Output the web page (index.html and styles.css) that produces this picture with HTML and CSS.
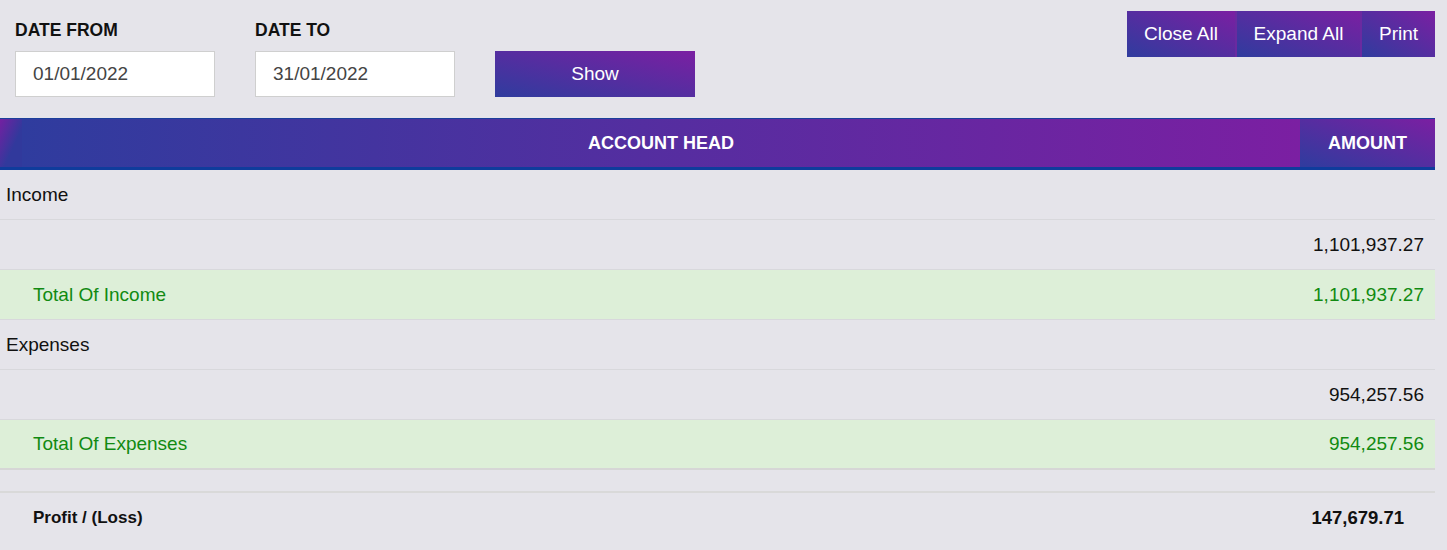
FILE: index.html
```html
<!DOCTYPE html>
<html>
<head>
<meta charset="utf-8">
<link rel="stylesheet" href="styles.css">
</head>
<body>
<div class="top">
  <div class="filters">
    <div class="field">
      <label class="lbl">DATE FROM</label>
      <div class="input">01/01/2022</div>
    </div>
    <div class="field">
      <label class="lbl">DATE TO</label>
      <div class="input">31/01/2022</div>
    </div>
    <div class="field">
      <div class="lbl">&nbsp;</div>
      <button class="btn show">Show</button>
    </div>
  </div>
  <div class="actions">
    <button class="btn act w1">Close All</button>
    <button class="btn act w2">Expand All</button>
    <button class="btn act w3">Print</button>
  </div>
</div>

<div class="report">
  <div class="head">
    <div class="hc hc-toggle"></div>
    <div class="hc hc-main">ACCOUNT HEAD</div>
    <div class="hc hc-amt">AMOUNT</div>
  </div>
  <div class="row group"><span>Income</span></div>
  <div class="row"><span></span><span class="amt">1,101,937.27</span></div>
  <div class="row total"><span>Total Of Income</span><span class="amt">1,101,937.27</span></div>
  <div class="row group"><span>Expenses</span></div>
  <div class="row"><span></span><span class="amt">954,257.56</span></div>
  <div class="row total last"><span>Total Of Expenses</span><span class="amt">954,257.56</span></div>
  <div class="spacer"></div>
  <div class="row profit"><span>Profit / (Loss)</span><span class="amt">147,679.71</span></div>
</div>
</body>
</html>
```
FILE: styles.css
```css
html, body {
  margin: 0;
  padding: 0;
  background: #e5e4ea;
  font-family: "Liberation Sans", Arial, sans-serif;
  color: #111;
}

.top {
  display: flex;
  justify-content: space-between;
  align-items: flex-start;
  padding: 0 12px 0 15px;
}

.filters {
  display: flex;
  gap: 40px;
  padding-top: 21px;
}

.field {
  display: flex;
  flex-direction: column;
}

.lbl {
  font-size: 17.5px;
  font-weight: bold;
  line-height: 19px;
  height: 19px;
  margin-bottom: 11px;
  color: #111;
}

.input {
  box-sizing: border-box;
  width: 200px;
  height: 46px;
  background: #fff;
  border: 1px solid #cfcfcf;
  padding: 0 0 0 17px;
  font-size: 19px;
  line-height: 44px;
  color: #444;
}

.btn {
  border: none;
  color: #fff;
  font-family: "Liberation Sans", Arial, sans-serif;
  background: linear-gradient(to top right, #2f3c9e, #7b1fa2);
  cursor: pointer;
  padding: 0;
}

.show {
  width: 200px;
  height: 46px;
  font-size: 19px;
}

.actions {
  display: flex;
  gap: 2px;
  margin-top: 11px;
  background: #6a2aa0;
}

.act {
  height: 46px;
  font-size: 19px;
}
.w1 { width: 108px; }
.w2 { width: 123px; }
.w3 { width: 73px; }

.report {
  margin-top: 21px;
  width: 1435px;
}

.head {
  display: flex;
  height: 48px;
  border-top: 1px solid #1b3f9c;
  border-bottom: 3px solid #0f3c9c;
}

.hc {
  display: flex;
  align-items: center;
  justify-content: center;
  color: #fff;
  font-weight: bold;
  font-size: 18px;
}
.hc-toggle {
  width: 22px;
  background: linear-gradient(to bottom right, #7420a1, #31399c 60%);
}
.hc-main {
  flex: 1;
  background: linear-gradient(to right, #2f3c9e, #7b1fa2);
}
.hc-amt {
  width: 135px;
  background: linear-gradient(to top right, #2f3c9e, #7b1fa2);
}

.row {
  display: flex;
  justify-content: space-between;
  align-items: center;
  height: 49px;
  border-bottom: 1px solid #d8d8dc;
  font-size: 19px;
  padding: 0 11px 0 6px;
}
.row .amt {
  color: #111;
}
.row.total {
  background: #ddefd8;
  color: #118a11;
  padding-left: 33px;
}
.row.total .amt {
  color: #118a11;
}
.row.total.last {
  height: 48px;
  border-bottom: 2px solid #d6d6d6;
}
.spacer {
  height: 21px;
  border-bottom: 2px solid #d9d9d9;
}
.row.profit {
  border-bottom: none;
  font-weight: bold;
  font-size: 17px;
  padding-left: 33px;
  padding-right: 31px;
}
.row.profit .amt {
  font-size: 18.5px;
}
```
